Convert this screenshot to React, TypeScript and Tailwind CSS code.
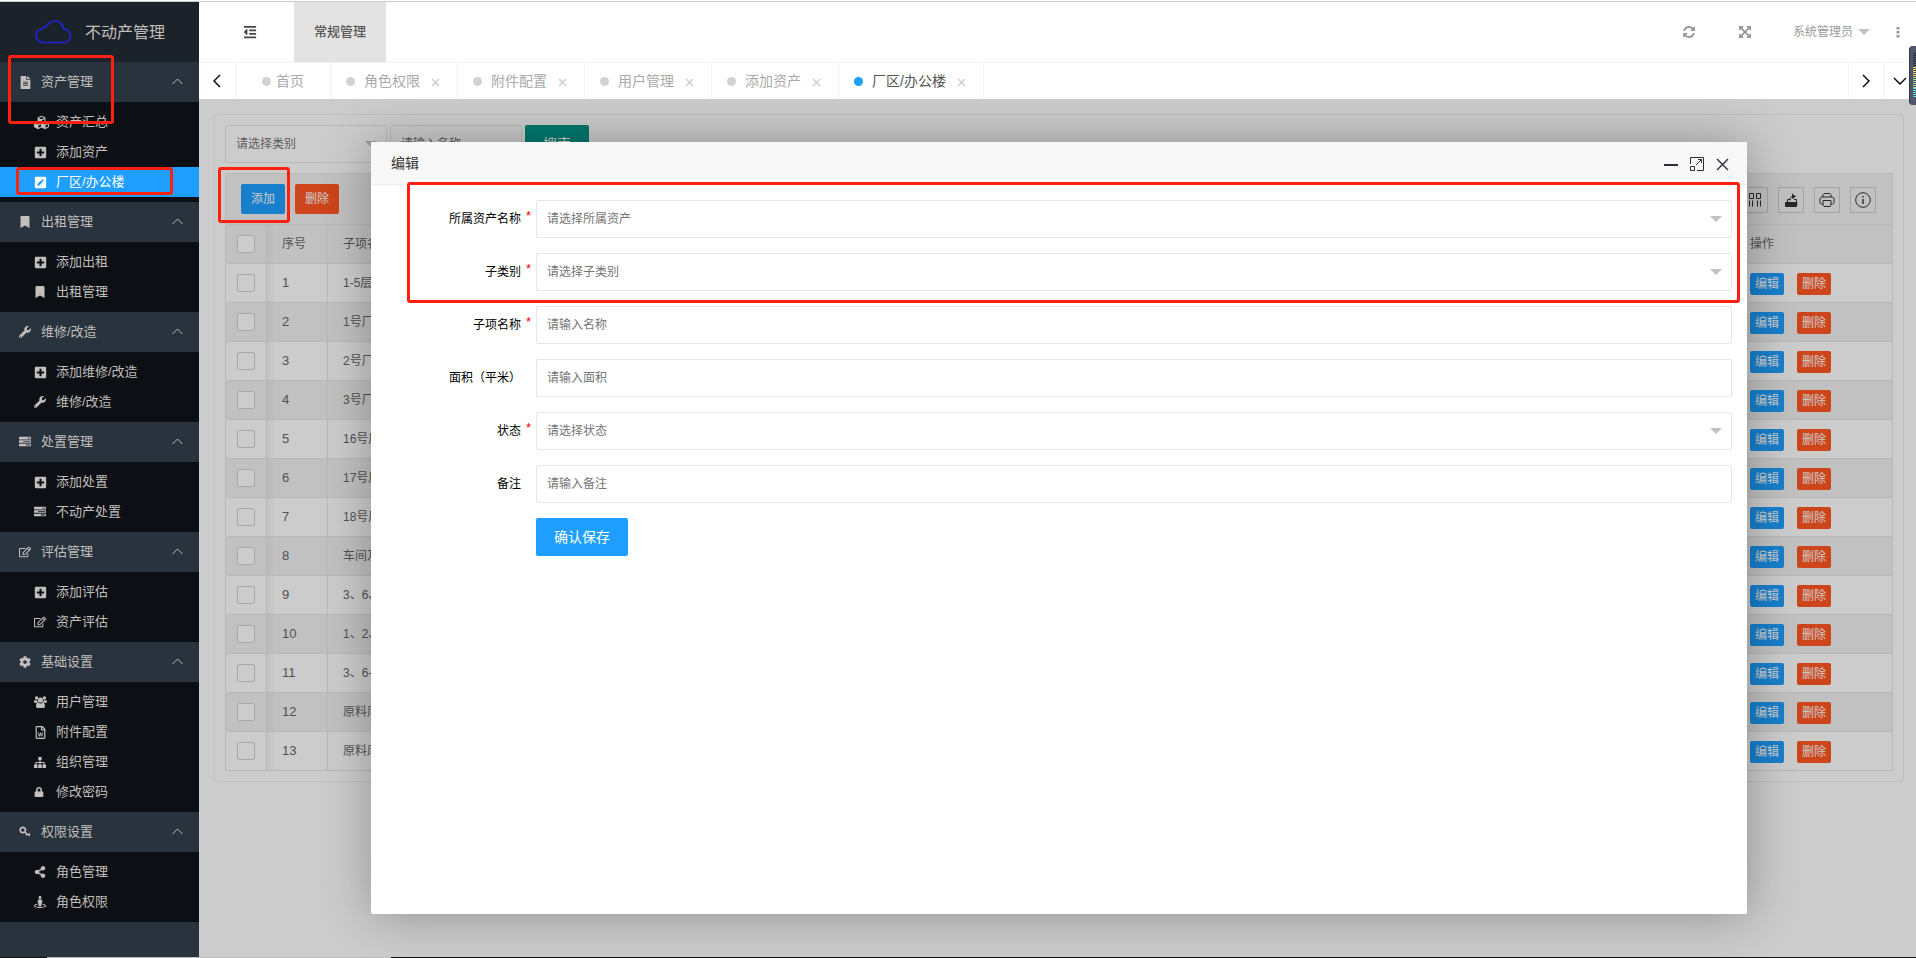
import { useState, type ReactNode } from "react";
import {
    FaBookmark,
    FaCog,
    FaCubes,
    FaFileAlt,
    FaLock,
    FaOutdent,
    FaPenSquare,
    FaPlusSquare,
    FaRegEdit,
    FaRegFileWord,
    FaShareAlt,
    FaStreetView,
    FaWrench,
} from "react-icons/fa";

function TasksIcon() {
    return (
        <svg width="12" height="12" viewBox="0 0 1792 1792" fill="currentColor">
            <path d="M1024 1408h640v-128h-640v128zm-384-512h1024v-128h-1024v128zm640-512h384v-128h-384v128zm512 832v256q0 26-19 45t-45 19h-1664q-26 0-45-19t-19-45v-256q0-26 19-45t45-19h1664q26 0 45 19t19 45zm0-512v256q0 26-19 45t-45 19h-1664q-26 0-45-19t-19-45v-256q0-26 19-45t45-19h1664q26 0 45 19t19 45zm0-512v256q0 26-19 45t-45 19h-1664q-26 0-45-19t-19-45v-256q0-26 19-45t45-19h1664q26 0 45 19t19 45z" />
        </svg>
    );
}

function KeyIcon() {
    return (
        <svg width="12" height="12" viewBox="0 0 12 12" fill="none" stroke="currentColor">
            <circle cx="3.800" cy="4" r="2.700" strokeWidth="1.700" />
            <path d="M5.800 6l5 4M9.600 9.200l1.400-1.800M7.800 7.800L6.800 9.300" strokeWidth="1.500" />
        </svg>
    );
}

function UsersIcon() {
    return (
        <svg width="13" height="12" viewBox="0 0 13 12" fill="currentColor">
            <circle cx="2.600" cy="2" r="1.700" />
            <circle cx="10.400" cy="2" r="1.700" />
            <circle cx="6.500" cy="4" r="2.600" />
            <path d="M0 6.500C0 4.800.4 4 1.200 4c.5.300 1.400.6 2.200.4 0 1 .3 1.700.8 2.300H.8C.3 6.700 0 6.700 0 6.500zM13 6.500C13 4.800 12.600 4 11.800 4c-.5.300-1.400.6-2.200.4 0 1-.3 1.700-.8 2.300h3.400c.5 0 .8 0 .8-.2zM2 10.300C2 8 2.800 6.600 4.200 6.600c.6.500 1.400.9 2.300.9s1.700-.4 2.300-.9C10.200 6.600 11 8 11 10.300c0 1-.6 1.700-1.600 1.700H3.600C2.600 12 2 11.300 2 10.300z" />
        </svg>
    );
}

function SitemapIcon() {
    return (
        <svg width="12" height="11" viewBox="0 0 12 11" fill="currentColor">
            <path d="M4.300 0h3.400v3.300H4.300zM0 7.500h3.500V11H0zM4.250 7.500h3.500V11h-3.500zM8.500 7.500H12V11H8.500zM1.400 5h9.200v2.800h-.9V5.900H6.450v2h-.9v-2H2.300v1.900h-.9zM5.550 3h.9v2.300h-.9z" />
        </svg>
    );
}

function RefreshIcon() {
    return (
        <svg width="12" height="12" viewBox="0 0 1536 1536" fill="currentColor">
            <path d="M1511 928q0 5-1 7-64 268-268 434.5t-478 166.5q-146 0-282.5-55t-243.5-157l-129 129q-19 19-45 19t-45-19-19-45v-448q0-26 19-45t45-19h448q26 0 45 19t19 45-19 45l-137 137q71 66 161 102t187 36q134 0 250-65t186-179q11-17 53-117 8-23 30-23h192q13 0 22.5 9.5t9.5 22.5zm25-800v448q0 26-19 45t-45 19h-448q-26 0-45-19t-19-45 19-45l138-138q-148-137-349-137-134 0-250 65t-186 179q-11 17-53 117-8 23-30 23h-199q-13 0-22.5-9.5t-9.5-22.5v-7q65-268 270-434.5t480-166.5q146 0 284 55.5t245 156.5l130-129q19-19 45-19t45 19 19 45z" />
        </svg>
    );
}

function FullscreenIcon() {
    return (
        <svg width="14" height="14" viewBox="0 0 1792 1792" fill="currentColor">
            <path d="M1411 541l-355 355 355 355 144-144q29-31 70-14 39 17 39 59v448q0 26-19 45t-45 19h-448q-42 0-59-40-17-39 14-69l144-144-355-355-355 355 144 144q31 30 14 69-17 40-59 40h-448q-26 0-45-19t-19-45v-448q0-42 40-59 39-17 69 14l144 144 355-355-355-355-144 144q-19 19-45 19-12 0-24-5-40-17-40-59v-448q0-26 19-45t45-19h448q42 0 59 40 17 39-14 69l-144 144 355 355 355-355-144-144q-31-30-14-69 17-40 59-40h448q26 0 45 19t19 45v448q0 42-39 59-13 5-25 5-26 0-45-19z" />
        </svg>
    );
}

function Caret() {
    return (
        <svg width="12" height="6" viewBox="0 0 12 6" fill="#c2c2c2">
            <path d="M0 0h12L6 6z" />
        </svg>
    );
}

function Chevron({ d, w, h }: { d: string; w: number; h: number }) {
    return (
        <svg width={w} height={h} viewBox={`0 0 ${w} ${h}`} fill="none" stroke="currentColor" strokeWidth="1.4">
            <path d={d} />
        </svg>
    );
}

const MENU: { title: string; icon: ReactNode; items: { label: string; icon: ReactNode }[] }[] = [
    {
        title: "资产管理",
        icon: <FaFileAlt size={13} />,
        items: [
            { label: "资产汇总", icon: <FaCubes size={15} /> },
            { label: "添加资产", icon: <FaPlusSquare size={13} /> },
            { label: "厂区/办公楼", icon: <FaPenSquare size={13} /> },
        ],
    },
    {
        title: "出租管理",
        icon: <FaBookmark />,
        items: [
            { label: "添加出租", icon: <FaPlusSquare size={13} /> },
            { label: "出租管理", icon: <FaBookmark /> },
        ],
    },
    {
        title: "维修/改造",
        icon: <FaWrench />,
        items: [
            { label: "添加维修/改造", icon: <FaPlusSquare size={13} /> },
            { label: "维修/改造", icon: <FaWrench /> },
        ],
    },
    {
        title: "处置管理",
        icon: <TasksIcon />,
        items: [
            { label: "添加处置", icon: <FaPlusSquare size={13} /> },
            { label: "不动产处置", icon: <TasksIcon /> },
        ],
    },
    {
        title: "评估管理",
        icon: <FaRegEdit />,
        items: [
            { label: "添加评估", icon: <FaPlusSquare size={13} /> },
            { label: "资产评估", icon: <FaRegEdit /> },
        ],
    },
    {
        title: "基础设置",
        icon: <FaCog />,
        items: [
            { label: "用户管理", icon: <UsersIcon /> },
            { label: "附件配置", icon: <FaRegFileWord size={13} /> },
            { label: "组织管理", icon: <SitemapIcon /> },
            { label: "修改密码", icon: <FaLock size={10} /> },
        ],
    },
    {
        title: "权限设置",
        icon: <KeyIcon />,
        items: [
            { label: "角色管理", icon: <FaShareAlt size={12} /> },
            { label: "角色权限", icon: <FaStreetView size={12} /> },
        ],
    },
];

const TABS = ["首页", "角色权限", "附件配置", "用户管理", "添加资产", "厂区/办公楼"];

const ROWS = [
    "1-5层",
    "1号厂",
    "2号厂",
    "3号厂",
    "16号厂",
    "17号厂",
    "18号厂",
    "车间及",
    "3、6、7",
    "1、2、3",
    "3、6-7",
    "原料库",
    "原料库",
];

const FIELDS = [
    { id: "asset", label: "所属资产名称", hint: "请选择所属资产", required: true, select: true },
    { id: "type", label: "子类别", hint: "请选择子类别", required: true, select: true },
    { id: "name", label: "子项名称", hint: "请输入名称", required: true, select: false },
    { id: "area", label: "面积（平米）", hint: "请输入面积", required: false, select: false },
    { id: "status", label: "状态", hint: "请选择状态", required: true, select: true },
    { id: "remark", label: "备注", hint: "请输入备注", required: false, select: false },
];

function Sidebar({ active }: { active: string }) {
    return (
        <aside className="relative w-[199px] shrink-0 bg-[#28333e] text-[13px] text-[#c2bfbc]">
            <div className="flex h-[60px] items-center bg-[#1b2229] pb-2 pl-[35px] text-base">
                <svg className="mt-2" width="37" height="24" viewBox="0 0 37 24" fill="none" stroke="#2222e0" strokeWidth="1.6">
                    <path d="M8.5 22.5h20c4 0 7-2.6 7-6.4 0-4-2.8-7-6.800-7C28.500 4.500 24.800 1 20 1c-4 0-7 2-8.600 5.800C9.800 6.300 7.600 7 7 9.200 3.500 9.600 1 12 1 15.700c0 3.900 3.200 6.800 7.500 6.800z" />
                </svg>
                <span className="mt-[10px] ml-[13px]">不动产管理</span>
            </div>
            <nav>
                {MENU.map((group) => (
                    <div key={group.title}>
                        <button className="flex h-10 w-full items-center pr-4 pl-[19px]">
                            <span className="flex w-[22px] text-xs">{group.icon}</span>
                            {group.title}
                            <svg className="mb-[2px] ml-auto" width="11" height="7" viewBox="0 0 11 7" fill="none" stroke="currentColor">
                                <path d="M.5 6L5.500 1l5 5" />
                            </svg>
                        </button>
                        <ul className="bg-[#0c1014] py-[5px]">
                            {group.items.map((item) => (
                                <li key={item.label}>
                                    <a
                                        href="#"
                                        className={
                                            item.label === active
                                                ? "flex h-[30px] items-center bg-[#1e9fff] pl-[34px] text-white"
                                                : "flex h-[30px] items-center pl-[34px]"
                                        }
                                    >
                                        <span className="flex w-[22px] text-xs">{item.icon}</span>
                                        {item.label}
                                    </a>
                                </li>
                            ))}
                        </ul>
                    </div>
                ))}
            </nav>
            <div className="pointer-events-none absolute top-[53px] left-2 h-[69px] w-[106px] rounded-[3px] border-3 border-[#ff2010]" />
            <div className="pointer-events-none absolute top-[165px] left-4 h-7 w-[157px] rounded-[3px] border-3 border-[#ff2010]" />
        </aside>
    );
}

function Header() {
    return (
        <header className="flex h-[60px] bg-white text-[13px] text-[#999]">
            <button aria-label="收起菜单" className="flex w-[95px] items-center pl-11 text-[#444]">
                <FaOutdent size={14} />
            </button>
            <a href="#" className="flex items-center bg-[#e3e3e3] px-5 font-medium text-[#555]">
                常规管理
            </a>
            <div className="ml-auto flex">
                <button aria-label="刷新" className="flex w-14 items-center justify-center">
                    <RefreshIcon />
                </button>
                <button aria-label="全屏" className="flex w-14 items-center justify-center">
                    <FullscreenIcon />
                </button>
                <button className="flex w-[106px] items-center gap-[5px] pl-5 text-xs">
                    系统管理员
                    <Caret />
                </button>
                <button aria-label="更多" className="flex w-[37px] items-center justify-center">
                    <svg width="4" height="12" viewBox="0 0 4 12" fill="currentColor">
                        <path d="M.5 1h3v2.500h-3zM.5 5h3v2.500h-3zM.5 9h3v2.500h-3z" />
                    </svg>
                </button>
            </div>
        </header>
    );
}

function Tabs({ active }: { active: string }) {
    return (
        <div className="flex h-[37px] border-t border-[#f3f3f3] bg-white text-sm text-[#aaa]">
            <button aria-label="向左" className="flex w-[37px] items-center justify-center border-r border-[#f3f3f3] text-black">
                <Chevron d="M7 1L1 7l6 6" w={8} h={14} />
            </button>
            {TABS.map((tab) => {
                const on = tab === active;
                return (
                    <div key={tab} className={tab === "首页" ? "flex border-r border-[#f3f3f3] px-[26px]" : "flex border-r border-[#f3f3f3] pr-[17px] pl-[15px]"}>
                        <button className={on ? "flex items-center text-[#555]" : "flex items-center"}>
                            <span
                                className={
                                    on
                                        ? "mr-[9px] h-[9px] w-[9px] rounded-full bg-[#1e9fff]"
                                        : tab === "首页"
                                          ? "mr-[5px] h-[9px] w-[9px] rounded-full bg-[#d2d2d2]"
                                          : "mr-[9px] h-[9px] w-[9px] rounded-full bg-[#d2d2d2]"
                                }
                            />
                            {tab}
                        </button>
                        {tab !== "首页" && (
                            <button aria-label="关闭" className="flex items-center pt-[2px] pl-[11px] text-[#ccc]">
                                <Chevron d="M1 1l7 7M8 1L1 8" w={9} h={9} />
                            </button>
                        )}
                    </div>
                );
            })}
            <button aria-label="向右" className="ml-auto flex w-[35px] items-center justify-center border-l border-[#f3f3f3] text-black">
                <Chevron d="M1 1l6 6-6 6" w={8} h={14} />
            </button>
            <button aria-label="标签操作" className="flex w-[33px] items-center justify-center border-l border-[#f3f3f3] text-black">
                <Chevron d="M1 1l6 6 6-6" w={14} h={9} />
            </button>
        </div>
    );
}

function ToolButton({ label, children }: { label: string; children: ReactNode }) {
    return (
        <button aria-label={label} className="flex h-[26px] w-[26px] items-center justify-center border border-[#ccc] text-[#333]">
            <svg width="16" height="16" viewBox="0 0 16 16" fill="none" stroke="currentColor">
                {children}
            </svg>
        </button>
    );
}

function AssetTable() {
    return (
        <div className="mt-[10px] border-x border-t border-[#e6e6e6]">
            <div className="flex h-[51px] items-center border-b border-[#e6e6e6] bg-[#f2f2f2] pr-4 pl-[15px]">
                <button className="h-[30px] rounded-[2px] bg-[#1e9fff] px-[10px] text-white">添加</button>
                <button className="ml-[10px] h-[30px] rounded-[2px] bg-[#ff5722] px-[10px] text-white">删除</button>
                <div className="ml-auto flex gap-[10px] pt-[2px]">
                    <ToolButton label="筛选列">
                        <path d="M2.500 1.500h4v5h-4zM9.500 1.500h4v5h-4zM2.500 8.500v6M5.500 8.500v6M10.500 8.500v6M13.500 8.500v6" />
                    </ToolButton>
                    <ToolButton label="导出">
                        <path d="M2.500 10.500h11.500l-.5 4h-11z" fill="currentColor" />
                        <path d="M4.500 10V7.500h3M11 7.500h2.500V10M7 8.500c0-3 1-4 3-4" />
                        <path d="M9 1.500l4 3-4 2.500z" fill="currentColor" stroke="none" />
                    </ToolButton>
                    <ToolButton label="打印">
                        <path d="M4 5V2.500l1-1h6l1 1V5M4 12H2.500C1.500 12 1 11.500 1 10.500V7c0-1.300.7-2 2-2h10c1.300 0 2 .7 2 2v3.500c0 1-.5 1.500-1.500 1.500H12M4 8.500h8V13l-1 1.500H5L4 13z" />
                    </ToolButton>
                    <ToolButton label="提示">
                        <circle cx="8" cy="8" r="7.300" />
                        <path d="M8 7v5M8 4v1.500" strokeWidth="1.400" />
                    </ToolButton>
                </div>
            </div>
            <table className="w-full table-fixed border-separate border-spacing-0 text-left text-[#666]">
                <colgroup>
                    <col className="w-[41px]" />
                    <col className="w-[61px]" />
                    <col />
                    <col className="w-[158px]" />
                </colgroup>
                <thead>
                    <tr className="h-[39px] bg-[#f2f2f2]">
                        <th className="border-r border-b border-[#e6e6e6] pl-[11px]">
                            <input type="checkbox" aria-label="全选" className="block h-[18px] w-[18px] appearance-none rounded-[2px] border border-[#d2d2d2] bg-white" />
                        </th>
                        <th className="border-r border-b border-[#e6e6e6] bg-linear-to-r from-black/4 to-transparent to-15% pl-[15px] font-normal">序号</th>
                        <th className="border-b border-[#e6e6e6] pl-[15px] font-normal">子项名称</th>
                        <th className="border-b border-l border-[#e6e6e6] pl-[15px] font-normal">操作</th>
                    </tr>
                </thead>
                <tbody>
                    {ROWS.map((name, i) => (
                        <tr key={i} className="h-[39px] even:bg-[#f2f2f2]">
                            <td className="border-r border-b border-[#e6e6e6] pl-[11px]">
                                <input type="checkbox" aria-label={`选择第${i + 1}行`} className="block h-[18px] w-[18px] appearance-none rounded-[2px] border border-[#d2d2d2] bg-white" />
                            </td>
                            <td className="border-r border-b border-[#e6e6e6] bg-linear-to-r from-black/4 to-transparent to-15% pl-[15px] text-[13px]">{i + 1}</td>
                            <td className="border-b border-[#e6e6e6] pl-[15px]">{name}</td>
                            <td className="border-b border-l border-[#e6e6e6] pl-[15px]">
                                <div className="flex gap-[13px] pt-[2px]">
                                    <button className="h-[22px] rounded-[2px] bg-[#1e9fff] px-[5px] text-white">编辑</button>
                                    <button className="h-[22px] rounded-[2px] bg-[#ff5722] px-[5px] text-white">删除</button>
                                </div>
                            </td>
                        </tr>
                    ))}
                </tbody>
            </table>
        </div>
    );
}

function EditDialog() {
    return (
        <div role="dialog" aria-label="编辑" className="relative flex-1 rounded-[2px] bg-white shadow-[1px_1px_50px_rgba(0,0,0,0.3)]">
            <div className="flex h-[43px] items-center border-b border-[#eee] bg-[#f8f8f8] pr-[18px] pl-5 text-sm text-[#333]">
                <h2>编辑</h2>
                <div className="ml-auto flex items-center gap-3 pt-[2px] text-[#2e2d3c]">
                    <button aria-label="最小化">
                        <svg width="14" height="14" viewBox="0 0 14 14" fill="currentColor">
                            <path d="M0 7h14v2H0z" />
                        </svg>
                    </button>
                    <button aria-label="最大化">
                        <svg width="14" height="14" viewBox="0 0 14 14" fill="none" stroke="currentColor">
                            <path d="M.5 7V.5h13v13H7M.5 9.500h4v4h-4zM6 8l5.500-5.500M8 2.500h3.500V6" />
                        </svg>
                    </button>
                    <button aria-label="关闭">
                        <Chevron d="M1 1l11 11M12 1L1 12" w={13} h={13} />
                    </button>
                </div>
            </div>
            <form className="flex flex-col gap-[15px] pt-[15px] pr-[15px]" onSubmit={(e) => e.preventDefault()}>
                {FIELDS.map((f) => (
                    <div key={f.id} className="flex items-center">
                        <label htmlFor={f.id} className="w-[150px] shrink-0 text-right text-black">
                            {f.label}
                        </label>
                        <span className="w-[15px] shrink-0 pb-[6px] pl-[5px] text-[13px] text-[#ff0000]">{f.required ? "*" : ""}</span>
                        {f.select ? (
                            <div className="relative flex-1">
                                <select id={f.id} className="h-[38px] w-full appearance-none rounded-[2px] border border-[#e6e6e6] bg-white pl-[10px] text-[#757575]">
                                    <option>{f.hint}</option>
                                </select>
                                <span className="pointer-events-none absolute top-4 right-[10px]">
                                    <Caret />
                                </span>
                            </div>
                        ) : (
                            <input id={f.id} placeholder={f.hint} className="h-[38px] flex-1 rounded-[2px] border border-[#e6e6e6] pl-[10px] placeholder:text-[#757575]" />
                        )}
                    </div>
                ))}
                <button className="ml-[165px] h-[38px] self-start rounded-[2px] bg-[#1e9fff] px-[18px] text-sm text-white">确认保存</button>
            </form>
            <div className="pointer-events-none absolute top-10 right-[7px] left-9 h-[121px] rounded-[3px] border-3 border-[#ff2010]" />
        </div>
    );
}

export default function App() {
    const [active] = useState("厂区/办公楼");

    return (
        <div className="relative flex min-h-screen flex-col bg-white pt-px font-['Liberation_Sans','Noto_Sans_CJK_SC',sans-serif] text-xs">
            <div className="h-px bg-[#ccc]" />
            <div className="flex flex-1">
                <Sidebar active={active} />
                <div className="flex min-w-0 flex-1 flex-col">
                    <Header />
                    <Tabs active={active} />
                    <main className="relative flex-1 overflow-hidden p-[15px] pr-3">
                        <div className="rounded-[4px] border border-[#eee] p-[10px]">
                            <div className="flex h-[38px]">
                                <div className="relative w-[162px]">
                                    <select aria-label="类别" className="h-[38px] w-full appearance-none rounded-[2px] border border-[#e6e6e6] bg-white pl-[10px] text-[#757575]">
                                        <option>请选择类别</option>
                                    </select>
                                    <span className="pointer-events-none absolute top-4 right-[10px]">
                                        <Caret />
                                    </span>
                                </div>
                                <input aria-label="名称" placeholder="请输入名称" className="ml-[3px] w-[132px] rounded-[2px] border border-[#e6e6e6] pl-[10px] placeholder:text-[#757575]" />
                                <button className="ml-[3px] rounded-[2px] bg-[#009688] px-[18px] text-sm text-white">搜索</button>
                            </div>
                            <AssetTable />
                        </div>
                        <div className="absolute inset-0 flex bg-black/20 pt-[43px] pr-[169px] pb-[43px] pl-[172px]">
                            <EditDialog />
                        </div>
                        <div className="pointer-events-none absolute top-[68px] left-[19px] h-14 w-[72px] rounded-[3px] border-3 border-[#ff2010]" />
                    </main>
                </div>
            </div>
            <div className="flex h-px bg-[#111]">
                <div className="ml-[47px] w-[344px] bg-[#bbb]" />
            </div>
            {/* volume meter docked on the window edge */}
            <div className="absolute top-[46px] right-0 flex h-[59px] w-[7px] items-center justify-end rounded-l-[4px] border-l border-[#333646] bg-[#50566a]">
                <svg width="3" height="45" viewBox="0 0 3 45" strokeWidth="3" strokeDasharray="1 1">
                    <path d="M1.500 0v14" stroke="#2c2f3c" />
                    <path d="M1.500 14v10" stroke="#f0d860" />
                    <path d="M1.500 24v11" stroke="#a8dc90" />
                    <path d="M1.500 35v10" stroke="#60dcd0" />
                </svg>
            </div>
        </div>
    );
}
